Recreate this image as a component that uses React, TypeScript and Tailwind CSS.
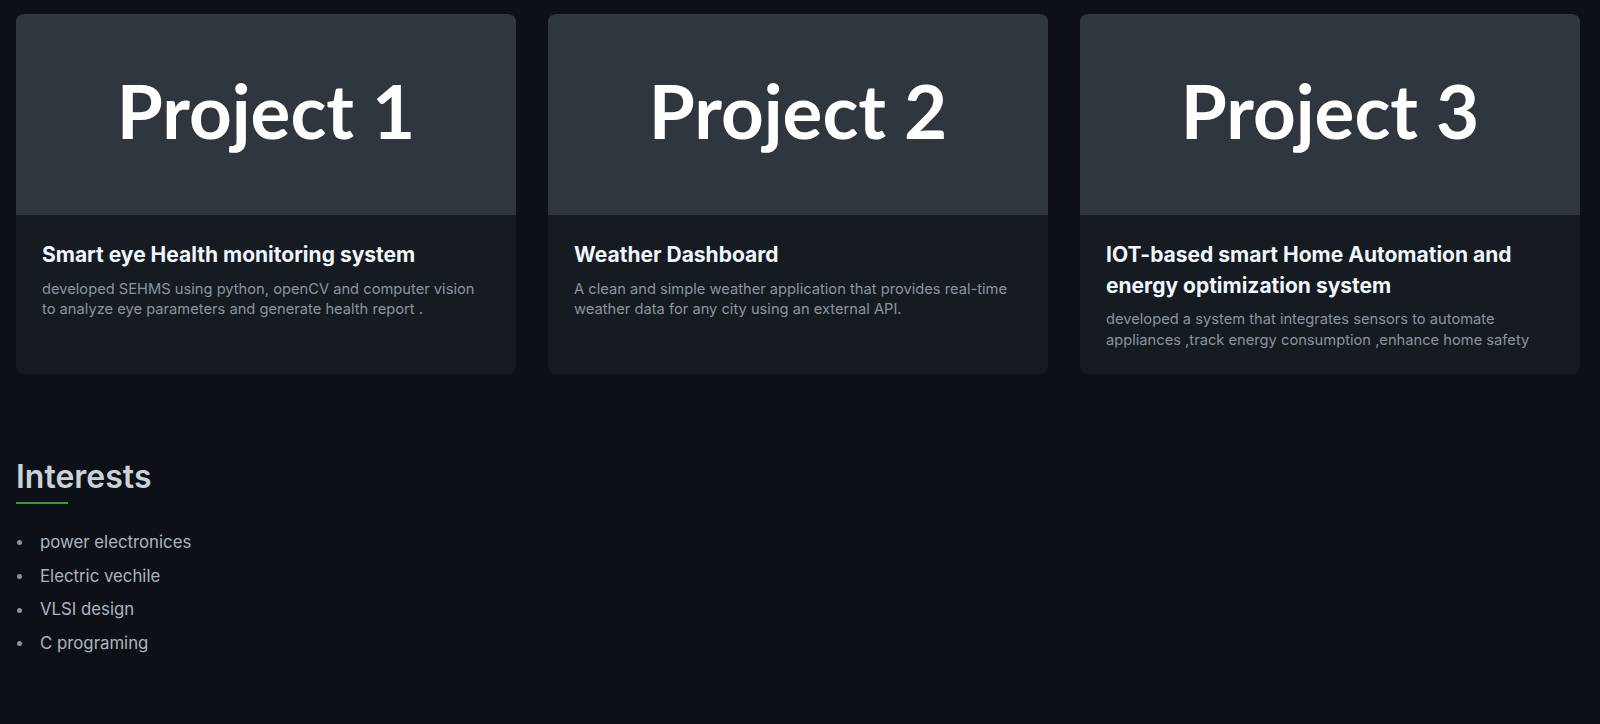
const projects = [
  {
    label: 'Project 1',
    title: 'Smart eye Health monitoring system',
    desc: 'developed SEHMS using python, openCV and computer vision to analyze eye parameters and generate health report .',
  },
  {
    label: 'Project 2',
    title: 'Weather Dashboard',
    desc: 'A clean and simple weather application that provides real-time weather data for any city using an external API.',
  },
  {
    label: 'Project 3',
    title: 'IOT-based smart Home Automation and energy optimization system',
    desc: 'developed a system that integrates sensors to automate appliances ,track energy consumption ,enhance home safety',
  },
];

const interests = ['power electronices', 'Electric vechile', 'VLSI design', 'C programing'];

function ProjectCard({ label, title, desc }: { label: string; title: string; desc: string }) {
  return (
    <div className="rounded-lg overflow-hidden bg-[#161b22] flex flex-col">
      <div className="h-[201px] bg-[#30363d] flex items-center justify-center">
        <span className="font-['Lato',sans-serif] font-bold text-[74.5px] leading-none text-white pb-[8px]">
          {label}
        </span>
      </div>
      <div className="px-[26px] pt-[25px] pb-[24px]">
        <h3 className="text-[21px] leading-[30.5px] font-bold text-[#f0f6fc] mb-[8px]">{title}</h3>
        <p className="text-[14.7px] leading-[20.6px] text-[#8b949e]">{desc}</p>
      </div>
    </div>
  );
}

export default function App() {
  return (
    <div className="min-h-screen bg-[#0d1117] font-['Inter',sans-serif]">
      <div className="pl-4 pr-[20px] pt-[14px] pb-16">
        <div className="grid grid-cols-3 gap-8">
          {projects.map(p => (
            <ProjectCard key={p.label} {...p} />
          ))}
        </div>

        <section className="mt-[84px]">
          <h2 className="text-[32px] leading-[38px] font-semibold text-[#c9d1d9]">Interests</h2>
          <div className="mt-[6px] h-[2px] w-[52px] bg-[#2ea043]" />
          <ul className="mt-[26px]">
            {interests.map(item => (
              <li key={item} className="flex items-center mb-2 text-[16.8px] leading-[25.6px] text-[#adb5bf]">
                <span className="ml-[1px] w-[5px] h-[5px] rounded-full bg-[#8b949e]" />
                <span className="ml-[18px]">{item}</span>
              </li>
            ))}
          </ul>
        </section>
      </div>
    </div>
  );
}
